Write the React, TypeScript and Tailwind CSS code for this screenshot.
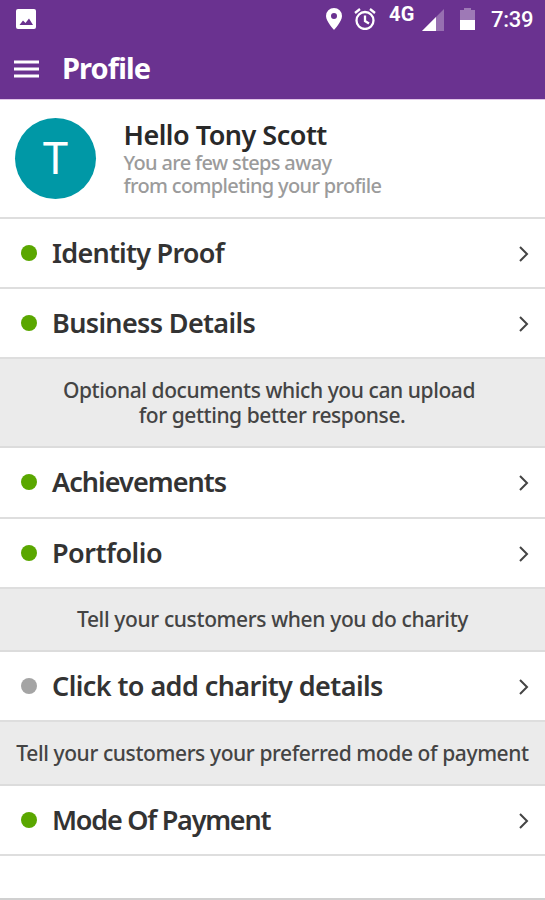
import type { ReactNode } from "react";

function Row({ label, fit, done = true }: { label: string; fit: string; done?: boolean }) {
  return (
    <div className="flex h-[70.2px] shrink-0 items-center border-b-2 border-[#dedede] bg-white pr-[15px] pl-[20.500px]">
      <span className={`size-4 shrink-0 rounded-full ${done ? "bg-[#5aa700]" : "bg-[#a4a4a4]"}`} />
      <span className={`ml-[15.500px] whitespace-nowrap text-[27px] leading-8 font-semibold text-[#333] ${fit}`}>{label}</span>
      <svg className="mt-0.5 ml-auto h-[18px] w-3" viewBox="0 0 12 18" fill="none" stroke="#444" strokeWidth="2">
        <path d="M2 2 9 9l-7 7" />
      </svg>
    </div>
  );
}

function Note({ children, size }: { children: ReactNode; size: string }) {
  return (
    <div className={`flex shrink-0 flex-col items-center justify-center border-b-2 border-[#dcdcdc] bg-[#ebebeb] text-[21px] leading-[25px] font-medium whitespace-nowrap text-[#444] ${size}`}>
      {children}
    </div>
  );
}

export default function App() {
  return (
    <div className="flex h-[900px] w-full flex-col overflow-hidden bg-white font-['Noto_Sans','Open_Sans',sans-serif]">
      <header className="h-[100px] shrink-0 border-b border-[#e2c6e8] bg-[#6a3290] text-white">
        <div className="flex h-[38px] items-center pr-3 pl-4">
          <svg className="size-5" viewBox="0 0 20 20">
            <rect width="20" height="20" rx="2" fill="#fff" />
            <path d="M3.500 16 7 11.500l2.500 2.500 3.500-4.500 4 6.500Z" fill="#6a3290" />
          </svg>
          <svg className="ml-auto h-[22px] w-4" viewBox="0 0 16 22" fill="#fff">
            <path fillRule="evenodd" d="M8 0a8 8 0 0 0-8 8c0 5.500 8 14 8 14s8-8.500 8-14a8 8 0 0 0-8-8Zm0 5a3 3 0 1 1 0 6 3 3 0 0 1 0-6Z" />
          </svg>
          <svg className="ml-3 size-[22px]" viewBox="0 0 22 22" fill="none" stroke="#fff" strokeWidth="2.300">
            <circle cx="11" cy="12.500" r="8.500" />
            <path d="M11 7.500V13l4 2.500M1 5l5-4M21 5l-5-4" />
          </svg>
          <span className="mb-[11px] ml-[13px] w-[26px] font-[Roboto,sans-serif] text-[20px] leading-5 font-bold tracking-[0.4px]">4G</span>
          <svg className="mt-0.5 ml-[7px] size-[22px]" viewBox="0 0 22 22" fill="#fff">
            <path d="M0 22 22 0v22Z" opacity=".3" />
            <path d="M0 22 14 8v14Z" />
          </svg>
          <svg className="ml-4 h-[22px] w-[15px]" viewBox="0 0 15 22" fill="#fff">
            <path d="M0 2h4V0h7v2h4v10H0Z" opacity=".35" />
            <path d="M0 12h15v10H0Z" />
          </svg>
          <span className="mt-0.5 ml-4 w-[42px] font-[Roboto,sans-serif] text-[22px] leading-6 font-medium tracking-[-0.3px] whitespace-nowrap">7:39</span>
        </div>
        <div className="flex h-[61px] items-center pl-[14px]">
          <svg className="h-[18px] w-[25px]" viewBox="0 0 25 18" stroke="#fff" strokeWidth="2.800">
            <path d="M0 2h25M0 9h25M0 16h25" />
          </svg>
          <h1 className="mb-0.5 ml-[23px] text-[29px] leading-9 font-bold tracking-[-0.9px]">Profile</h1>
        </div>
      </header>

      <section className="flex h-[119px] shrink-0 items-center border-b-2 border-[#dedede] pl-[15px]">
        <div className="flex size-[81px] shrink-0 items-center justify-center rounded-full bg-[#0098a6] pt-px font-[Roboto,sans-serif] text-[44px] leading-none text-white">
          T
        </div>
        <div className="ml-[27.500px] whitespace-nowrap">
          <h2 className="mb-0.5 text-[27px] leading-[28px] font-semibold tracking-[-0.5px] text-[#292929]">Hello Tony Scott</h2>
          <p className="text-[20px] leading-[23px] font-medium text-[#9b9b9b]">
            <span className="block tracking-[-0.65px]">You are few steps away</span>
            <span className="block tracking-[-0.65px]">from completing your profile</span>
          </p>
        </div>
      </section>

      <Row label="Identity Proof" fit="tracking-[-0.75px]" />
      <Row label="Business Details" fit="tracking-[-0.65px]" />
      <Note size="h-[89px] pr-[7px]">
        <span className="tracking-[-0.42px]">Optional documents which you can upload</span>
        <span className="pl-[6px] tracking-[-0.42px]">for getting better response.</span>
      </Note>
      <Row label="Achievements" fit="tracking-[-0.95px]" />
      <Row label="Portfolio" fit="tracking-[-0.5px]" />
      <Note size="h-[63.500px]">
        <span className="tracking-[-0.37px]">Tell your customers when you do charity</span>
      </Note>
      <Row label="Click to add charity details" fit="tracking-[-0.58px]" done={false} />
      <Note size="h-[63.500px]">
        <span className="tracking-[-0.4px]">Tell your customers your preferred mode of payment</span>
      </Note>
      <Row label="Mode Of Payment" fit="tracking-[-1.25px]" />
      <div className="flex-1 border-b-2 border-[#d0d0d0]" />
    </div>
  );
}
